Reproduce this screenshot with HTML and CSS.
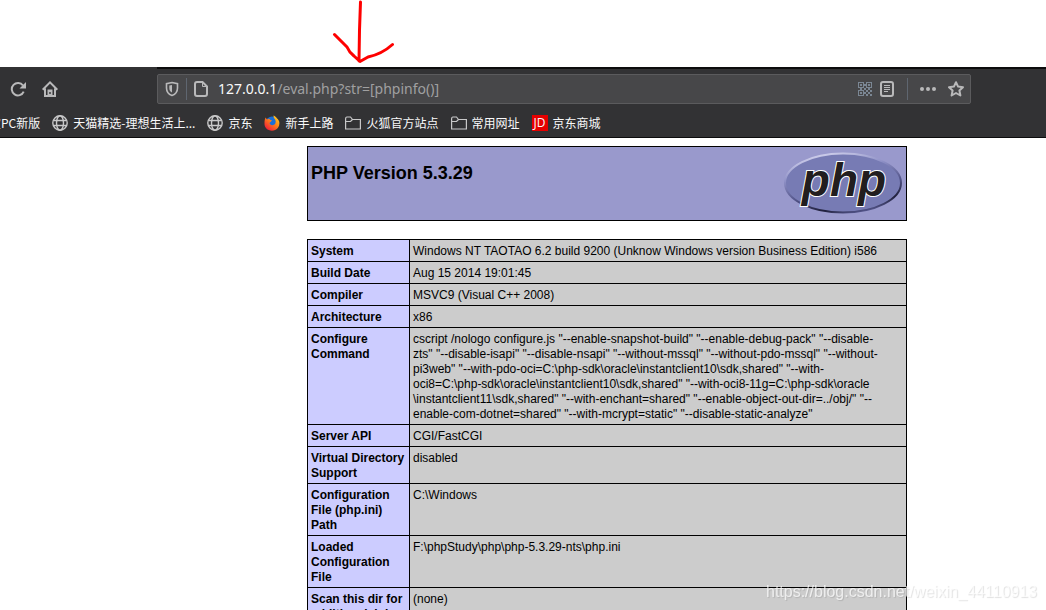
FILE: index.html
```html
<!DOCTYPE html>
<html lang="zh-CN">
<head>
<meta charset="utf-8">
<title>phpinfo()</title>
<link rel="stylesheet" href="styles.css">
</head>
<body>
<div class="note">
  <svg class="arrow" width="64" height="65" viewBox="0 0 64 65" aria-hidden="true">
    <path d="M30.500 2 L29.500 30 L29 61 M4.500 34.500 L17 47 Q19 52 24 56 L30 61.500 L38 57 Q52 54 62.500 44.500"/>
  </svg>
</div>

<header class="browser">
  <div class="tab-edge"></div>
  <div class="nav">
    <div class="nav-buttons">
      <button class="icon-btn" aria-label="Reload">
        <svg width="16" height="16" viewBox="0 0 16 16"><path class="line" d="M13.700 10.600A6.200 6.200 0 1 1 13 4.500"/><path class="fill" d="M16 1v6.500H9.500z"/></svg>
      </button>
      <button class="icon-btn" aria-label="Home">
        <svg width="16" height="16" viewBox="0 0 16 16"><path class="line" d="M.700 8.700 8 1.400l7.300 7.300M3 7.500V15h10V7.500"/><path class="fill" fill-rule="evenodd" d="M5.500 8.500h5V15h-5zM7.300 11v2h1.400v-2z"/></svg>
      </button>
    </div>
    <div class="urlbar">
      <button class="icon-btn shield" aria-label="Tracking protection">
        <svg width="14" height="16" viewBox="0 0 14 16"><path class="line shield-line" d="M7 1.500 12.500 2.600V7c0 4-2 6.200-5.500 7.500C3.500 13.200 1.500 11 1.500 7V2.600z"/><path class="fill" d="M7 4v7.500C5 10.500 4.300 9.500 4.300 7V4.600z"/></svg>
      </button>
      <span class="rule"></span>
      <svg class="page-icon" width="14" height="16" viewBox="0 0 14 16" aria-hidden="true"><path class="line" d="M3 1h5.500L13 5.500V13a2 2 0 0 1-2 2H3a2 2 0 0 1-2-2V3a2 2 0 0 1 2-2z"/><path class="line thin" d="M8.500 1v4.500H13"/></svg>
      <label class="host" for="address">127.0.0.1</label>
      <input class="address" id="address" type="text" value="/eval.php?str=[phpinfo()]">
      <button class="icon-btn qr" aria-label="QR code">
        <svg width="14" height="14" viewBox="0 0 14 14"><path d="M0 0h6v6H0zM1 1v4h4V1zM8 0h6v6H8zM9 1v4h4V1zM0 8h6v6H0zM1 9v4h4V9z" fill-rule="evenodd"/><path d="M2 2h2v2H2zM10 2h2v2h-2zM2 10h2v2H2zM6 2h2v2H6zM6 6h2v2H6zM8 8h2v2H8zM12 8h2v2h-2zM10 10h2v2h-2zM8 12h2v2H8zM12 12h2v2h-2zM6 10h2v2H6zM10 6h2v2h-2zM2 6h2v2H2z"/></svg>
      </button>
      <button class="icon-btn reader" aria-label="Reader view">
        <svg width="14" height="16" viewBox="0 0 14 16"><rect class="line" x="1" y="1" width="12" height="14" rx="2"/><path class="line thin" d="M4 4.500h6M4 6.500h6M4 8.500h6M4 10.500h4"/></svg>
      </button>
      <span class="rule"></span>
      <button class="icon-btn dots" aria-label="Page actions">
        <svg width="16" height="16" viewBox="0 0 16 16"><circle class="fill" cx="2" cy="8" r="2"/><circle class="fill" cx="8" cy="8" r="2"/><circle class="fill" cx="14" cy="8" r="2"/></svg>
      </button>
      <button class="icon-btn" aria-label="Bookmark this page">
        <svg width="16" height="16" viewBox="0 0 16 16"><path class="line" stroke-linejoin="round" d="M8 1.200 10.100 5.600 15 6.200 11.400 9.500 12.400 14.500 8 12 3.600 14.500 4.600 9.500 1 6.200 5.900 5.600z"/></svg>
      </button>
    </div>
  </div>
  <nav class="bookmarks">
    <a class="bookmark" href="#">宝PC新版</a>
    <a class="bookmark" href="#"><svg width="16" height="16" viewBox="0 0 16 16"><g class="line globe"><circle cx="8" cy="8" r="7.200"/><ellipse cx="8" cy="8" rx="3.500" ry="7.200"/><path d="M1.500 5.500h13M1.500 10.500h13"/></g></svg>天猫精选-理想生活上...</a>
    <a class="bookmark" href="#"><svg width="16" height="16" viewBox="0 0 16 16"><g class="line globe"><circle cx="8" cy="8" r="7.200"/><ellipse cx="8" cy="8" rx="3.500" ry="7.200"/><path d="M1.500 5.500h13M1.500 10.500h13"/></g></svg>京东</a>
    <a class="bookmark" href="#"><svg width="16" height="16" viewBox="0 0 16 16">
      <defs><linearGradient id="fox" x1="1" y1="0" x2="0.200" y2="1"><stop offset="0" stop-color="#ffe226"/><stop offset="0.450" stop-color="#ff8a16"/><stop offset="1" stop-color="#f0183c"/></linearGradient></defs>
      <circle cx="8" cy="7.500" r="6" fill="#1a6fd8"/>
      <path fill="url(#fox)" d="M1.500 2.500 3 4.500 5 3.700 6.500 5 8 5.500 6.500 7 5.500 8c.5 2 2.500 2.700 4.500 1.700 2.500-1.300 1.800-4.700.500-6C9.500 2.500 9.500 1.500 9.500.500c1.500.5 2.800 1.500 3.500 3 1 .5 2 2 2.300 3.500C16 12 12.500 15.700 8 15.700S0 12.500.500 7.500C.500 5.500 1 4 1.500 2.500z"/></svg>新手上路</a>
    <a class="bookmark" href="#"><svg width="16" height="16" viewBox="0 0 16 16"><path class="line folder" d="M.600 14V4Q.600 2 2 2H5.500L7.500 4.500H15.400V14zM.600 6.500H5.500L7.500 4.500"/></svg>火狐官方站点</a>
    <a class="bookmark" href="#"><svg width="16" height="16" viewBox="0 0 16 16"><path class="line folder" d="M.600 14V4Q.600 2 2 2H5.500L7.500 4.500H15.400V14zM.600 6.500H5.500L7.500 4.500"/></svg>常用网址</a>
    <a class="bookmark" href="#"><span class="jd">JD</span>京东商城</a>
  </nav>
</header>

<main class="info">
  <div class="title">
    <h1>PHP Version 5.3.29</h1>
    <svg class="logo" width="120" height="64" viewBox="0 0 120 64" role="img" aria-label="PHP logo">
      <defs><linearGradient id="rim" x1="0.300" y1="0" x2="0.700" y2="1"><stop offset="0" stop-color="#d0d0ec"/><stop offset="0.300" stop-color="#8e90c6"/><stop offset="0.600" stop-color="#55578c"/><stop offset="0.850" stop-color="#20203c"/><stop offset="1" stop-color="#5c5e98"/></linearGradient></defs>
      <ellipse cx="60" cy="32" rx="58" ry="29.500" fill="#777bb4" stroke="url(#rim)" stroke-width="2"/>
      <text class="logo-text" x="61" y="45" text-anchor="middle">php</text>
    </svg>
  </div>

  <table class="facts">
    <tbody>
      <tr><th scope="row">System</th><td>Windows NT TAOTAO 6.2 build 9200 (Unknow Windows version Business Edition) i586</td></tr>
      <tr><th scope="row">Build Date</th><td>Aug 15 2014 19:01:45</td></tr>
      <tr><th scope="row">Compiler</th><td>MSVC9 (Visual C++ 2008)</td></tr>
      <tr><th scope="row">Architecture</th><td>x86</td></tr>
      <tr><th scope="row">Configure Command</th><td>cscript /nologo configure.js "--enable-snapshot-build" "--enable-debug-pack" "--disable-<br>zts" "--disable-isapi" "--disable-nsapi" "--without-mssql" "--without-pdo-mssql" "--without-<br>pi3web" "--with-pdo-oci=C:\php-sdk\oracle\instantclient10\sdk,shared" "--with-<br>oci8=C:\php-sdk\oracle\instantclient10\sdk,shared" "--with-oci8-11g=C:\php-sdk\oracle<br>\instantclient11\sdk,shared" "--with-enchant=shared" "--enable-object-out-dir=../obj/" "--<br>enable-com-dotnet=shared" "--with-mcrypt=static" "--disable-static-analyze"</td></tr>
      <tr><th scope="row">Server API</th><td>CGI/FastCGI</td></tr>
      <tr><th scope="row">Virtual Directory Support</th><td>disabled</td></tr>
      <tr><th scope="row">Configuration File (php.ini) Path</th><td>C:\Windows</td></tr>
      <tr><th scope="row">Loaded Configuration File</th><td>F:\phpStudy\php\php-5.3.29-nts\php.ini</td></tr>
      <tr><th scope="row">Scan this dir for additional .ini files</th><td>(none)</td></tr>
    </tbody>
  </table>
</main>
<div class="watermark">https://blog.csdn.net/weixin_44110913</div>
</body>
</html>
```
FILE: styles.css
```css
* { box-sizing: border-box; }
html { overflow: hidden; }
body {
  margin: 0;
  background: #fff;
  color: #000;
  font: 12px/15px "Liberation Sans", Arial, sans-serif;
}
svg { display: block; flex: none; }

.note { height: 67px; padding-left: 330px; }
.arrow path {
  fill: none;
  stroke: #fe0000;
  stroke-width: 3;
  stroke-linecap: round;
  stroke-linejoin: round;
}

.browser {
  background: #323234;
  border-bottom: 1px solid #0c0c0d;
  overflow: hidden;
}
.tab-edge { height: 2px; margin-left: 157px; background: #0c0c0d; }
.nav { display: flex; align-items: center; padding: 5px 75px 0 0; }
.nav-buttons { display: flex; gap: 16px; width: 157px; padding-left: 10px; }
.icon-btn {
  display: flex;
  padding: 0;
  border: 0;
  background: none;
}
.line { fill: none; stroke: #b9b9ba; stroke-width: 2; }
.thin { stroke-width: 1; }
.shield-line { stroke-width: 1.6; }
.fill { fill: #b9b9ba; }
.globe { stroke-width: 1.4; stroke: #c8c8c9; }
.folder { stroke-width: 1.2; stroke: #c8c8c9; }

.urlbar {
  display: flex;
  align-items: center;
  flex: 1;
  height: 30px;
  padding: 0 6px 0 7px;
  background: #474749;
  border: 1px solid #5b5b5d;
  border-radius: 2px;
}
.rule { width: 1px; height: 22px; background: #5f6670; }
.shield { margin-right: 7px; }
.page-icon { margin: 0 10px 0 7px; }
.host, .address { font: 14px/20px "Noto Sans", "Segoe UI", sans-serif; }
.host { color: #f9f9fa; }
.address {
  flex: 1;
  min-width: 0;
  padding: 0;
  border: 0;
  outline: 0;
  background: none;
  color: #a0a0a1;
}
.qr { margin-right: 8px; }
.qr path { fill: #7b8794; }
.reader { margin-right: 13px; }
.dots { margin: 0 12px; }

.bookmarks {
  display: flex;
  align-items: center;
  gap: 12px;
  height: 33px;
  margin-left: -11px;
  padding-top: 4px;
  white-space: nowrap;
}
.bookmark {
  display: flex;
  align-items: center;
  gap: 5px;
  color: #f9f9fa;
  font: 12px/16px "Noto Sans CJK SC", sans-serif;
  text-decoration: none;
}
.jd {
  width: 16px;
  background: #e60000;
  font: 12px/16px "Open Sans", sans-serif;
  text-align: center;
}

.info { width: 600px; margin: 8px 0 0 307px; }
.title {
  display: flex;
  justify-content: space-between;
  align-items: flex-start;
  height: 75px;
  padding: 4px 3px;
  background: #9999cc;
  border: 1px solid #000;
}
.title h1 { margin: 11px 0 0; font-size: 18px; line-height: 22px; }
.logo-text {
  fill: #221e1f;
  stroke: #fff;
  stroke-width: 2px;
  paint-order: stroke;
  font: italic bold 46px "Liberation Sans", Arial, sans-serif;
}

.facts {
  width: 100%;
  margin-top: 18px;
  border-collapse: collapse;
  table-layout: fixed;
}
.facts th, .facts td {
  padding: 4px 3px 2px;
  border: 1px solid #000;
  text-align: left;
  vertical-align: top;
}
.facts th { width: 102px; background: #ccccff; }
.facts td { background: #cccccc; white-space: nowrap; }

.watermark {
  position: fixed;
  right: 9px;
  bottom: 9px;
  color: rgba(255, 255, 255, 0.7);
  font-size: 16px;
  line-height: 18px;
  text-shadow: 1px 1px 1px rgba(0, 0, 0, 0.12);
}
```
